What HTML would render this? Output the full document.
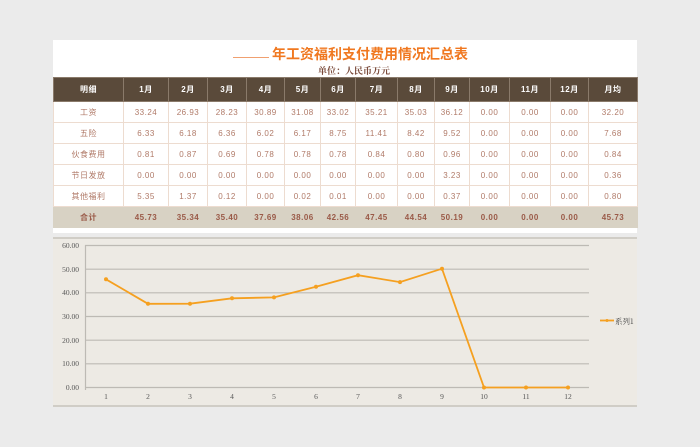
<!DOCTYPE html>
<html><head><meta charset="utf-8"><style>
body{margin:0;width:700px;height:447px;background:#ebebeb;position:relative;overflow:hidden;font-family:"Liberation Sans","Noto Sans CJK SC",sans-serif}
#panel{position:absolute;left:53px;top:40px;width:584px;height:193px;background:#fff}
#title{position:absolute;left:180px;top:5px;font-size:14px;line-height:18px;font-weight:bold;color:#f07820;white-space:nowrap;font-family:"Liberation Sans","Noto Sans CJK SC",sans-serif}
#title span{display:inline-block;width:36px;border-bottom:1px solid #f0a070;height:12px;vertical-align:top;margin-right:3px}
#unit{position:absolute;left:265px;top:25px;font-size:9px;line-height:12px;font-weight:bold;color:#7a4a3a;font-family:"Noto Serif CJK SC",serif}
table{position:absolute;left:0;top:37px;border-collapse:collapse;table-layout:fixed;width:584px}
td{border:1px solid #eddcd0;text-align:center;font-size:8px;color:#b07a68;padding:0;height:20px;letter-spacing:0.5px}
tr.h td{background:#5a4a3a;color:#fff;font-weight:bold;height:23px;border:1px solid #8a7a6a}
tr.t td{background:#d8d2c4;color:#9a5a48;font-weight:bold;border-color:#d8d2c4}
#chart{position:absolute;left:53px;top:237px;width:584px;height:166px;background:#edeae4;border-top:2px solid #d0cdc6;border-bottom:2px solid #d0cdc6}
</style></head><body>
<div id="panel">
<div id="title"><span></span>年工资福利支付费用情况汇总表</div>
<div id="unit">单位：人民币万元</div>
<table>
<colgroup><col style="width:70px"><col style="width:45px"><col style="width:39px"><col style="width:39px"><col style="width:38px"><col style="width:36px"><col style="width:35px"><col style="width:42px"><col style="width:37px"><col style="width:35px"><col style="width:40px"><col style="width:41px"><col style="width:38px"><col style="width:49px"></colgroup>
<tr class="h"><td>明细</td><td>1月</td><td>2月</td><td>3月</td><td>4月</td><td>5月</td><td>6月</td><td>7月</td><td>8月</td><td>9月</td><td>10月</td><td>11月</td><td>12月</td><td>月均</td></tr>
<tr><td>工资</td><td>33.24</td><td>26.93</td><td>28.23</td><td>30.89</td><td>31.08</td><td>33.02</td><td>35.21</td><td>35.03</td><td>36.12</td><td>0.00</td><td>0.00</td><td>0.00</td><td>32.20</td></tr>
<tr><td>五险</td><td>6.33</td><td>6.18</td><td>6.36</td><td>6.02</td><td>6.17</td><td>8.75</td><td>11.41</td><td>8.42</td><td>9.52</td><td>0.00</td><td>0.00</td><td>0.00</td><td>7.68</td></tr>
<tr><td>伙食费用</td><td>0.81</td><td>0.87</td><td>0.69</td><td>0.78</td><td>0.78</td><td>0.78</td><td>0.84</td><td>0.80</td><td>0.96</td><td>0.00</td><td>0.00</td><td>0.00</td><td>0.84</td></tr>
<tr><td>节日发放</td><td>0.00</td><td>0.00</td><td>0.00</td><td>0.00</td><td>0.00</td><td>0.00</td><td>0.00</td><td>0.00</td><td>3.23</td><td>0.00</td><td>0.00</td><td>0.00</td><td>0.36</td></tr>
<tr><td>其他福利</td><td>5.35</td><td>1.37</td><td>0.12</td><td>0.00</td><td>0.02</td><td>0.01</td><td>0.00</td><td>0.00</td><td>0.37</td><td>0.00</td><td>0.00</td><td>0.00</td><td>0.80</td></tr>
<tr class="t"><td>合计</td><td>45.73</td><td>35.34</td><td>35.40</td><td>37.69</td><td>38.06</td><td>42.56</td><td>47.45</td><td>44.54</td><td>50.19</td><td>0.00</td><td>0.00</td><td>0.00</td><td>45.73</td></tr>
</table>
</div>
<div id="chart"></div>
<svg width="700" height="447" style="position:absolute;left:0;top:0" font-family="Liberation Serif,serif" font-size="7.5" fill="#555">
<g stroke="#bdbab4" stroke-width="1.2">
<line x1="85" y1="245.5" x2="589" y2="245.5"/><line x1="85" y1="269.2" x2="589" y2="269.2"/><line x1="85" y1="292.8" x2="589" y2="292.8"/><line x1="85" y1="316.5" x2="589" y2="316.5"/><line x1="85" y1="340.2" x2="589" y2="340.2"/><line x1="85" y1="363.8" x2="589" y2="363.8"/><line x1="85" y1="387.5" x2="589" y2="387.5"/>
<line x1="85.5" y1="245" x2="85.5" y2="390"/>
</g>
<g text-anchor="end"><text x="79" y="248">60.00</text><text x="79" y="272">50.00</text><text x="79" y="295">40.00</text><text x="79" y="319">30.00</text><text x="79" y="343">20.00</text><text x="79" y="366">10.00</text><text x="79" y="390">0.00</text></g>
<g text-anchor="middle"><text x="106" y="399">1</text><text x="148" y="399">2</text><text x="190" y="399">3</text><text x="232" y="399">4</text><text x="274" y="399">5</text><text x="316" y="399">6</text><text x="358" y="399">7</text><text x="400" y="399">8</text><text x="442" y="399">9</text><text x="484" y="399">10</text><text x="526" y="399">11</text><text x="568" y="399">12</text></g>
<polyline fill="none" stroke="#f5a020" stroke-width="1.8" points="106,279.3 148,303.8 190,303.7 232,298.3 274,297.4 316,286.8 358,275.2 400,282.1 442,268.7 484,387.5 526,387.5 568,387.5"/>
<g fill="#f5a020"><circle cx="106" cy="279.3" r="2"/><circle cx="148" cy="303.8" r="2"/><circle cx="190" cy="303.7" r="2"/><circle cx="232" cy="298.3" r="2"/><circle cx="274" cy="297.4" r="2"/><circle cx="316" cy="286.8" r="2"/><circle cx="358" cy="275.2" r="2"/><circle cx="400" cy="282.1" r="2"/><circle cx="442" cy="268.7" r="2"/><circle cx="484" cy="387.5" r="2"/><circle cx="526" cy="387.5" r="2"/><circle cx="568" cy="387.5" r="2"/><circle cx="607" cy="320.5" r="1.5"/></g>
<line x1="600" y1="320.5" x2="614" y2="320.5" stroke="#f5a020" stroke-width="1.8"/>
<text x="615" y="324" font-family="Noto Serif CJK SC,serif" font-size="7.5" fill="#444">系列1</text>
</svg>
</body></html>
